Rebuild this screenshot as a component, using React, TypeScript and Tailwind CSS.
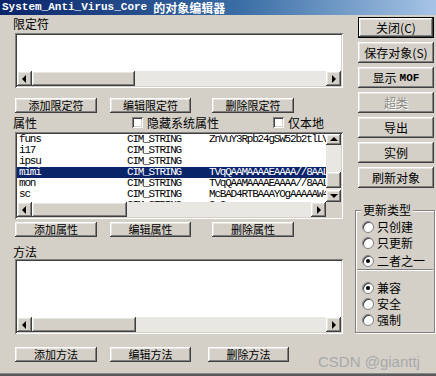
import React from "react";

const cjk = "font-['Noto_Sans_CJK_SC',sans-serif]";
const raised =
  "bg-[#d4d0c8] shadow-[inset_-1px_-1px_#404040,inset_1px_1px_#ffffff,inset_-2px_-2px_#808080,inset_2px_2px_#e8e6e1]";
const sunken =
  "shadow-[inset_1px_1px_#808080,inset_-1px_-1px_#ffffff,inset_2px_2px_#404040,inset_-2px_-2px_#d4d0c8]";
const track = "bg-[#e9e7e2]";

function Arrow({ dir }: { dir: "l" | "r" | "u" | "d" }) {
  const pts = {
    l: "5,0 5,8 1,4",
    r: "2,0 2,8 6,4",
    u: "0,5 8,5 4,1",
    d: "0,2 8,2 4,6",
  }[dir];
  return (
    <svg width="8" height="8" viewBox="0 0 8 8">
      <polygon points={pts} fill="#000" />
    </svg>
  );
}

function SBtn({ dir, cls }: { dir: "l" | "r" | "u" | "d"; cls: string }) {
  return (
    <div className={`${raised} ${cls} flex items-center justify-center shrink-0`}>
      <Arrow dir={dir} />
    </div>
  );
}

function HScroll({ thumb, corner }: { thumb: number; corner?: boolean }) {
  return (
    <div className="flex h-[15px] shrink-0">
      <SBtn dir="l" cls="w-[15px] h-[15px]" />
      <div className={`${raised} h-[15px] shrink-0`} style={{ width: thumb }} />
      <div className={`${track} flex-1`} />
      <SBtn dir="r" cls="w-[15px] h-[15px]" />
      {corner && <div className="w-[15px] h-[15px] bg-[#d4d0c8] shrink-0" />}
    </div>
  );
}

function Btn({ children, w = "w-[82px]" }: { children: React.ReactNode; w?: string }) {
  return (
    <div className={`${raised} ${w} h-[15px] flex items-center justify-center text-[11px] leading-[11px] text-black`}>
      {children}
    </div>
  );
}

function RBtn({
  children,
  def,
  disabled,
}: {
  children: React.ReactNode;
  def?: boolean;
  disabled?: boolean;
}) {
  return (
    <div
      className={`${raised} w-[76px] h-[21px] ml-[3px] flex items-center justify-center text-[12px] leading-[12px] ${
        def ? "border border-black" : ""
      } ${disabled ? "text-[#8c8a85] [text-shadow:1px_1px_#ffffff]" : "text-black"}`}
    >
      {children}
    </div>
  );
}

function Check() {
  return <div className={`w-[11px] h-[11px] bg-white ${sunken} shrink-0`} />;
}

function Radio({ on, label, cls }: { on?: boolean; label: string; cls: string }) {
  return (
    <div className={`flex items-center h-[16px] ${cls}`}>
      <div className="w-[12px] h-[12px] rounded-full bg-white border border-[#808080] shadow-[inset_1px_1px_#404040] flex items-center justify-center shrink-0">
        {on && <div className="w-[4px] h-[4px] rounded-full bg-black" />}
      </div>
      <span className="ml-[3px] text-[12px] leading-[12px] text-black">{label}</span>
    </div>
  );
}

const rows = [
  ["funs", "CIM_STRING", "ZnVuY3Rpb24gSW52b2tlLV", false],
  ["i17", "CIM_STRING", "", false],
  ["ipsu", "CIM_STRING", "", false],
  ["mimi", "CIM_STRING", "TVqQAAMAAAAEAAAA//8AAL", true],
  ["mon", "CIM_STRING", "TVqQAAMAAAAEAAAA//8AAL", false],
  ["sc", "CIM_STRING", "McBAD4RTBAAAYOgAAAAAW4", false],
  ["wu", "CIM_STRING", "2 2", false],
] as const;

export default function App() {
  return (
    <div className={`${cjk} relative w-[436px] h-[376px] bg-[#d4d0c8] flex flex-col overflow-hidden`}>
      {/* title bar */}
      <div className="h-[15px] shrink-0 flex items-center pl-[2px] bg-[linear-gradient(90deg,#0a246a_0%,#3a6ea5_55%,#a6c4e6_100%)] text-white font-bold">
        <span className="font-['Liberation_Mono',monospace] text-[11px] leading-[15px]">
          System_Anti_Virus_Core
        </span>
        <span className="ml-[6px] text-[12px] leading-[15px]">的对象编辑器</span>
      </div>

      <div className="flex flex-1">
        {/* left column */}
        <div className="w-[355px] pl-[15px] flex flex-col">
          <div className="-ml-[2px] h-[18px] text-[12px] leading-[18px]">限定符</div>
          <div className={`w-[328px] h-[55px] bg-white ${sunken} p-[2px] flex flex-col`}>
            <div className="flex-1 bg-white" />
            <HScroll thumb={103} />
          </div>
          <div className="mt-[10px] flex">
            <Btn>添加限定符</Btn>
            <div className="ml-[13px]">
              <Btn w="w-[81px]">编辑限定符</Btn>
            </div>
            <div className="ml-[21px]">
              <Btn>删除限定符</Btn>
            </div>
          </div>

          <div className="h-[19px] flex items-center">
            <span className="-ml-[2px] w-[119px] text-[12px] leading-[12px]">属性</span>
            <Check />
            <span className="ml-[4px] w-[126px] text-[12px] leading-[12px]">隐藏系统属性</span>
            <Check />
            <span className="ml-[4px] text-[12px] leading-[12px]">仅本地</span>
          </div>
          <div className={`w-[328px] h-[87px] bg-white ${sunken} p-[2px] flex flex-col`}>
            <div className="flex flex-1 min-h-0">
              <div className="flex-1 overflow-hidden font-['Liberation_Mono',monospace] text-[11px] tracking-[-1.2px] text-black">
                {rows.map(([n, t, v, sel]) => (
                  <div
                    key={n}
                    className={`flex h-[11px] leading-[11px] whitespace-nowrap ${
                      sel ? "bg-[#0a246a] text-white" : ""
                    }`}
                  >
                    <span className="w-[110px] pl-[2px] shrink-0">{n}</span>
                    <span className="w-[82px] shrink-0">{t}</span>
                    <span>{v}</span>
                  </div>
                ))}
              </div>
              <div className="w-[15px] flex flex-col shrink-0">
                <SBtn dir="u" cls="w-[15px] h-[11px]" />
                <div className={`${track} h-[27px]`} />
                <div className={`${raised} h-[16px]`} />
                <div className={`${track} flex-1`} />
                <SBtn dir="d" cls="w-[15px] h-[12px]" />
              </div>
            </div>
            <HScroll thumb={95} corner />
          </div>
          <div className="mt-[3px] flex">
            <Btn>添加属性</Btn>
            <div className="ml-[13px]">
              <Btn w="w-[81px]">编辑属性</Btn>
            </div>
            <div className="ml-[21px]">
              <Btn>删除属性</Btn>
            </div>
          </div>

          <div className="-ml-[2px] h-[22px] pt-[9px] text-[12px] leading-[12px]">方法</div>
          <div className={`w-[328px] h-[75px] bg-white ${sunken} p-[2px] flex flex-col`}>
            <div className="flex-1 bg-white" />
            <HScroll thumb={104} />
          </div>
          <div className="mt-[13px] flex">
            <Btn>添加方法</Btn>
            <div className="ml-[13px]">
              <Btn w="w-[81px]">编辑方法</Btn>
            </div>
            <div className="ml-[17px]">
              <Btn w="w-[81px]">删除方法</Btn>
            </div>
          </div>
        </div>

        {/* right column */}
        <div className="w-[80px] flex flex-col pt-[2px]">
          <div className="flex flex-col gap-[4px]">
            <RBtn def>关闭(C)</RBtn>
            <RBtn>保存对象(S)</RBtn>
            <RBtn>
              显示 <span className="ml-[3px] font-['Liberation_Mono',monospace] font-bold text-[11px]">MOF</span>
            </RBtn>
            <RBtn disabled>超类</RBtn>
            <RBtn>导出</RBtn>
            <RBtn>实例</RBtn>
            <RBtn>刷新对象</RBtn>
          </div>
          <div className="relative mt-[22px] w-[80px] h-[123px] border border-[#808080] shadow-[inset_1px_1px_#ffffff,1px_1px_#ffffff] pl-[6px] pt-[8px]">
            <span className="absolute -top-[7px] left-[5px] px-[2px] bg-[#d4d0c8] text-[12px] leading-[12px]">
              更新类型
            </span>
            <Radio label="只创建" cls="" />
            <Radio label="只更新" cls="" />
            <Radio on label="二者之一" cls="mt-[2px]" />
            <div className="-ml-[5px] mr-[1px] h-[2px] border-t border-[#808080] border-b border-b-white" />
            <Radio on label="兼容" cls="mt-[9px]" />
            <Radio label="安全" cls="" />
            <Radio label="强制" cls="" />
          </div>
        </div>
      </div>

      <div className="h-[3px] shrink-0 bg-[#5a5a5a] border-t border-[#8a8a8a]" />

      <span className="absolute left-[318px] top-[354px] font-['Liberation_Sans',sans-serif] text-[15px] leading-[16px] text-[#a8a8a8]">
        CSDN @gianttj
      </span>
    </div>
  );
}
